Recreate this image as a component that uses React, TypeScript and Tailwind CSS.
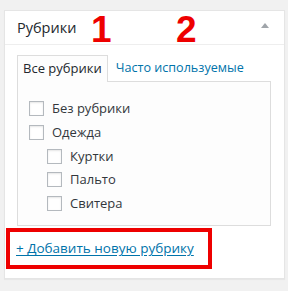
const items = [
  { label: "Без рубрики", child: false },
  { label: "Одежда", child: false },
  { label: "Куртки", child: true },
  { label: "Пальто", child: true },
  { label: "Свитера", child: true },
];

const App = () => {
  return (
    <div
      className="relative w-[288px] h-[291px] bg-[#f1f1f1] pt-[10px] pl-[4px] overflow-hidden"
      style={{ fontFamily: '"Open Sans", "Noto Sans", sans-serif' }}
    >
      <div className="w-[281px] h-[269px] bg-white border border-[#e5e5e5] shadow-[0_1px_1px_rgba(0,0,0,0.04)]">
        <div className="h-[34px] px-[12px] flex items-center justify-between border-b border-[#eeeeee]">
          <h2 className="text-[14.5px] text-[#23282d] leading-none pt-[2px]">Рубрики</h2>
          <span className="w-0 h-0 border-l-[4px] border-r-[4px] border-b-[5px] border-l-transparent border-r-transparent border-b-[#a0a5aa] mr-[3px] mt-[-4px]" />
        </div>

        <div className="px-[12px] pt-[10px]">
          <div className="flex items-end text-[13px]">
            <div className="relative z-10 h-[27px] px-[5px] flex items-center border border-b-0 border-[#dddddd] bg-[#fdfdfd] text-[#23282d] -mb-px">
              Все рубрики
            </div>
            <div className="h-[26px] px-[8px] flex items-center text-[12.6px] text-[#0073aa]">Часто используемые</div>
          </div>

          <div className="w-[254px] h-[145px] border border-[#dddddd] bg-[#fdfdfd] pt-[19px] pl-[11px]">
            <ul className="flex flex-col gap-[8.8px] text-[13px] text-[#32373c]">
              {items.map((it) => (
                <li key={it.label} className={`flex items-center gap-[8px] h-[15px] ${it.child ? "pl-[18px]" : ""}`}>
                  <span className="w-[15px] h-[15px] border border-[#b4b9be] bg-white shadow-[inset_0_1px_2px_rgba(0,0,0,0.1)] shrink-0" />
                  <span className="leading-none">{it.label}</span>
                </li>
              ))}
            </ul>
          </div>

          <div className="-ml-[11px] mt-[2px] w-[206px] h-[41px] border-4 border-[#ee0000] flex items-center pl-[6px]">
            <a href="#" className="text-[13.5px] text-[#0073aa] underline underline-offset-2">
              + Добавить новую рубрику
            </a>
          </div>
        </div>
      </div>

      <span
        className="absolute left-[91px] top-[11px] text-[37px] font-bold text-[#ee0000] leading-none"
        style={{ fontFamily: '"Liberation Sans", Arial, sans-serif' }}
      >
        1
      </span>
      <span
        className="absolute left-[176px] top-[11px] text-[37px] font-bold text-[#ee0000] leading-none"
        style={{ fontFamily: '"Liberation Sans", Arial, sans-serif' }}
      >
        2
      </span>
    </div>
  );
};

export default App;
